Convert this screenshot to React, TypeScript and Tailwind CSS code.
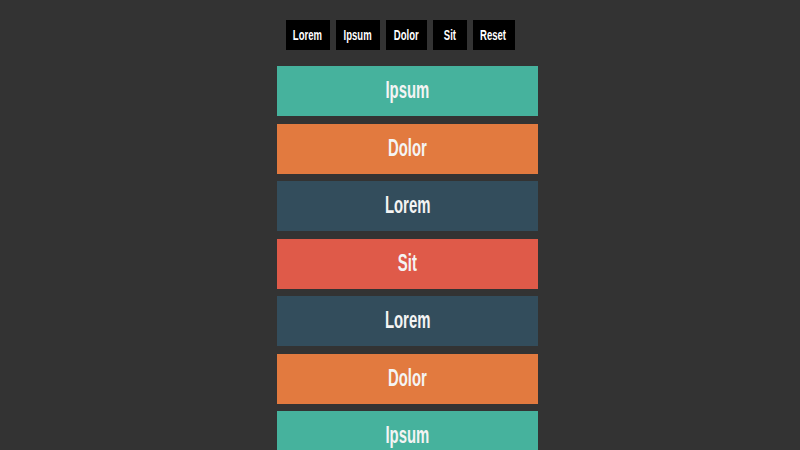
const buttons: { label: string; w: string }[] = [
  { label: "Lorem", w: "w-[44px]" },
  { label: "Ipsum", w: "w-[44px]" },
  { label: "Dolor", w: "w-[41px]" },
  { label: "Sit", w: "w-[34px]" },
  { label: "Reset", w: "w-[42px]" },
];

const bars: { label: string; color: string }[] = [
  { label: "Ipsum", color: "bg-[#46b29d]" },
  { label: "Dolor", color: "bg-[#e27a3f]" },
  { label: "Lorem", color: "bg-[#334d5c]" },
  { label: "Sit", color: "bg-[#df5a49]" },
  { label: "Lorem", color: "bg-[#334d5c]" },
  { label: "Dolor", color: "bg-[#e27a3f]" },
  { label: "Ipsum", color: "bg-[#46b29d]" },
];

export default function App() {
  return (
    <div
      className="h-[450px] overflow-hidden bg-[#333333] flex flex-col items-center pt-5"
      style={{ fontFamily: '"Liberation Sans", Arial, sans-serif' }}
    >
      <div className="flex gap-[6px]">
        {buttons.map((b) => (
          <button
            key={b.label}
            className={`${b.w} h-[30px] bg-black text-white text-[14px] font-bold leading-none flex items-center justify-center`}
          >
            <span className="inline-block scale-x-[0.68] whitespace-nowrap">{b.label}</span>
          </button>
        ))}
      </div>
      <div className="mt-4 flex flex-col gap-[7.5px] w-[261px] ml-[15px]">
        {bars.map((bar, i) => (
          <div
            key={i}
            className={`${bar.color} h-[50px] shrink-0 flex items-center justify-center text-[#f4f4f4] text-[24px] font-bold leading-none`}
          >
            <span className="inline-block scale-x-[0.62] -translate-y-[1px] whitespace-nowrap">{bar.label}</span>
          </div>
        ))}
      </div>
    </div>
  );
}
